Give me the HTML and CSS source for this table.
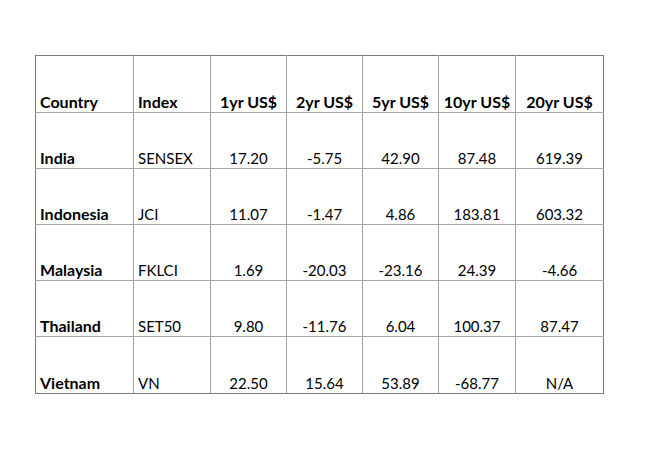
FILE: index.html
```html
<!DOCTYPE html>
<html>
<head>
<meta charset="utf-8">
<link rel="stylesheet" href="styles.css">
</head>
<body>
<table class="returns">
  <colgroup>
    <col class="c-country"><col class="c-index"><col class="c-num"><col class="c-num"><col class="c-num"><col class="c-num2"><col class="c-last">
  </colgroup>
  <tr class="head">
    <td class="left">Country</td><td class="left">Index</td><td>1yr US$</td><td>2yr US$</td><td>5yr US$</td><td>10yr US$</td><td>20yr US$</td>
  </tr>
  <tr>
    <td class="left name">India</td><td class="left">SENSEX</td><td>17.20</td><td>-5.75</td><td>42.90</td><td>87.48</td><td>619.39</td>
  </tr>
  <tr>
    <td class="left name">Indonesia</td><td class="left">JCI</td><td>11.07</td><td>-1.47</td><td>4.86</td><td>183.81</td><td>603.32</td>
  </tr>
  <tr>
    <td class="left name">Malaysia</td><td class="left">FKLCI</td><td>1.69</td><td>-20.03</td><td>-23.16</td><td>24.39</td><td>-4.66</td>
  </tr>
  <tr>
    <td class="left name">Thailand</td><td class="left">SET50</td><td>9.80</td><td>-11.76</td><td>6.04</td><td>100.37</td><td>87.47</td>
  </tr>
  <tr>
    <td class="left name">Vietnam</td><td class="left">VN</td><td>22.50</td><td>15.64</td><td>53.89</td><td>-68.77</td><td>N/A</td>
  </tr>
</table>
</body>
</html>
```
FILE: styles.css
```css
html, body {
  margin: 0;
  background: #ffffff;
}
body {
  padding: 55px 0 0 35px;
  font-family: Lato, "Liberation Sans", sans-serif;
  font-size: 15px;
  color: #000;
}
.returns {
  border-collapse: collapse;
  table-layout: fixed;
  width: 569px;
  border: 1px solid #7a7a7a;
}
.c-country { width: 98px; }
.c-index { width: 77px; }
.c-num { width: 76px; }
.c-num2 { width: 77px; }
.c-last { width: 88px; }
.returns td {
  height: 56px;
  box-sizing: border-box;
  padding: 0 4px 1px 4px;
  vertical-align: bottom;
  text-align: center;
  border: 1px solid #a6a6a6;
  line-height: 18px;
  white-space: nowrap;
}
.returns tr:first-child td,
.returns tr:last-child td { height: 57px; }
.returns tr:first-child td { border-top-color: #7a7a7a; }
.returns tr:last-child td { border-bottom-color: #7a7a7a; }
.returns td:first-child { border-left-color: #7a7a7a; }
.returns td:last-child { border-right-color: #7a7a7a; }
.returns td.left { text-align: left; }
.head td { font-weight: bold; font-size: 16px; }
.returns td.name { font-weight: bold; font-size: 16px; }
```
